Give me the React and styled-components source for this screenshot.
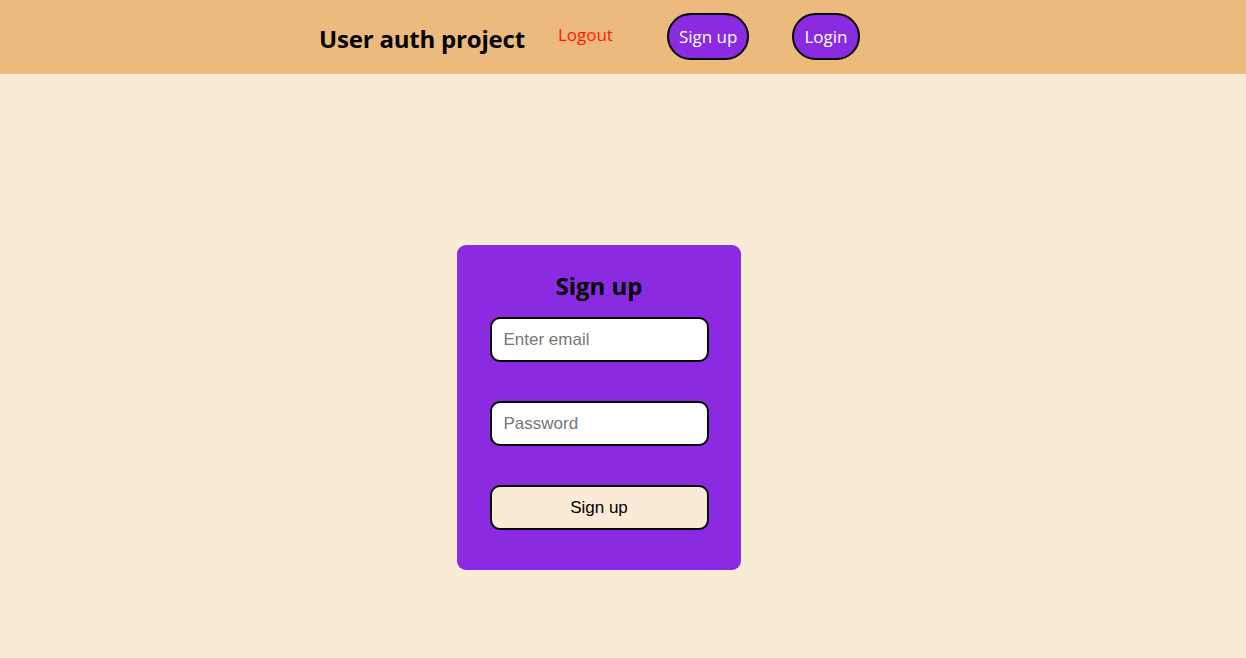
import React from 'react'
import styled, { createGlobalStyle } from 'styled-components';

const GlobalStyle = createGlobalStyle`
  html, body {
    margin: 0;
    padding: 0;
    background: #faebd7;
    font-family: "Open Sans", "Noto Sans", sans-serif;
  }
`;

const Page = styled.div`
  min-height: 658px;
  background: #faebd7;
`;

const Nav = styled.div`
  height: 74px;
  background: #ecba7c;
  display: flex;
  align-items: center;
  padding-left: 319px;
  box-sizing: border-box;
`;

const Brand = styled.div`
  font-size: 24px;
  font-weight: 700;
  color: #000;
  letter-spacing: -0.2px;
  margin-right: 33px;
  margin-top: 2px;
`;

const LogoutLink = styled.span`
  color: #ff1a00;
  font-size: 17px;
  margin-right: 54px;
  margin-top: -6px;
`;

const NavButton = styled.button`
  height: 47px;
  padding: 0 10px;
  margin-top: -2px;
  border: 2px solid #000;
  border-radius: 24px;
  background: #8a2be2;
  color: #fff;
  font-family: "Open Sans", "Noto Sans", sans-serif;
  font-size: 17px;
  margin-right: ${p => p.$gap || 0}px;
  cursor: pointer;
`;

const Main = styled.div`
  display: flex;
  justify-content: center;
  padding-top: 171px;
  padding-right: 48px;
`;

const Card = styled.form`
  width: 284px;
  height: 325px;
  box-sizing: border-box;
  background: #8a2be2;
  border-radius: 9px;
  padding: 24px 33px 0;
  display: flex;
  flex-direction: column;
  align-items: center;
`;

const Title = styled.h2`
  margin: 0 0 14px;
  font-size: 24px;
  font-weight: 700;
  color: #000;
  line-height: 34px;
`;

const Field = styled.input`
  width: 219px;
  height: 45px;
  flex-shrink: 0;
  box-sizing: border-box;
  border: 2px solid #000;
  border-radius: 10px;
  background: #fff;
  padding: 0 12px;
  font-family: "Liberation Sans", Arial, sans-serif;
  font-size: 17px;
  color: #000;
  margin-bottom: 39px;
  outline: none;
  &::placeholder {
    color: #767676;
  }
`;

const Submit = styled.button`
  width: 219px;
  height: 45px;
  flex-shrink: 0;
  box-sizing: border-box;
  border: 2px solid #000;
  border-radius: 10px;
  background: #faebd7;
  font-family: "Liberation Sans", Arial, sans-serif;
  font-size: 17px;
  color: #000;
  cursor: pointer;
`;

export default function App() {
  return (
    <Page>
      <GlobalStyle />
      <Nav>
        <Brand>User auth project</Brand>
        <LogoutLink>Logout</LogoutLink>
        <NavButton $gap={43}>Sign up</NavButton>
        <NavButton>Login</NavButton>
      </Nav>
      <Main>
        <Card onSubmit={e => e.preventDefault()}>
          <Title>Sign up</Title>
          <Field type="email" placeholder="Enter email" />
          <Field type="password" placeholder="Password" />
          <Submit type="submit">Sign up</Submit>
        </Card>
      </Main>
    </Page>
  )
}
